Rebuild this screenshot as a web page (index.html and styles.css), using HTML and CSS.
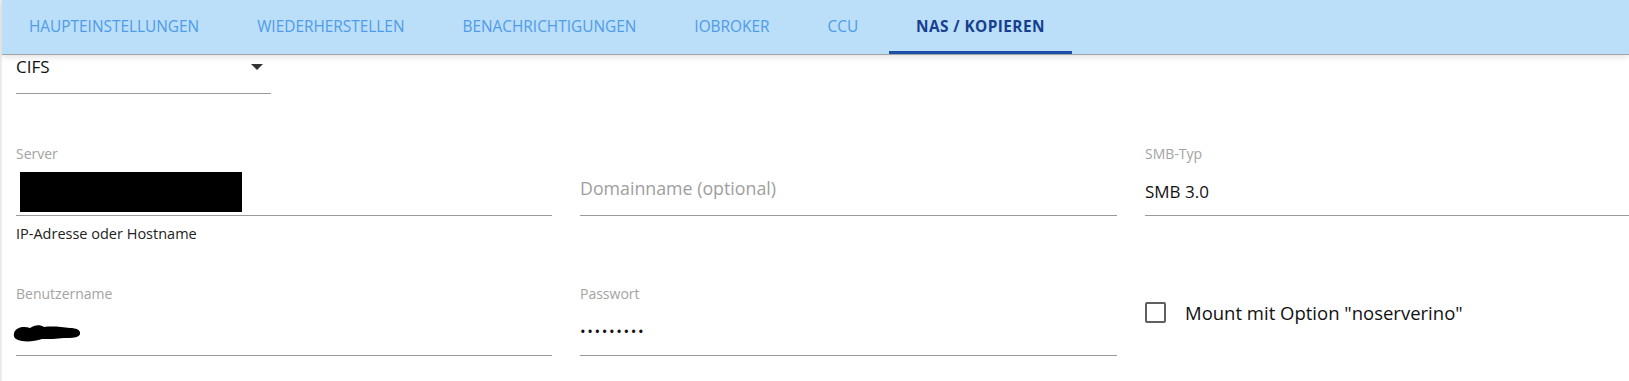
FILE: index.html
```html
<!DOCTYPE html>
<html lang="de">
<head>
  <meta charset="UTF-8" />
  <title>NAS / Kopieren</title>
  <link rel="stylesheet" href="styles.css">
</head>
<body>
  <div class="page">

    <!-- Tabs -->
    <div class="tabbar">
      <div class="tab">Haupteinstellungen</div>
      <div class="tab">Wiederherstellen</div>
      <div class="tab">Benachrichtigungen</div>
      <div class="tab">ioBroker</div>
      <div class="tab">CCU</div>
      <div class="tab active">NAS / Kopieren</div>
    </div>

    <div class="content">

      <!-- Mount type -->
      <div class="select">
        <span class="select-value">CIFS</span>
        <span class="select-arrow"></span>
      </div>

      <div class="fields">
        <div class="field">
          <div class="label">Server</div>
          <div class="value"><span class="redacted"></span></div>
          <div class="helper">IP-Adresse oder Hostname</div>
        </div>
        <div class="field">
          <div class="label"></div>
          <div class="value placeholder">Domainname (optional)</div>
        </div>
        <div class="field">
          <div class="label">SMB-Typ</div>
          <div class="value">SMB 3.0</div>
        </div>

        <div class="field">
          <div class="label">Benutzername</div>
          <div class="value">
            <svg class="scribble" width="70" height="24" viewBox="0 0 70 24">
              <path d="M2 12 C4 6 12 5 18 7 C22 4 28 3 32 6 C40 5 50 6 58 7 C64 7 69 9 68 13 C67 17 60 17 52 17 C44 18 38 18 30 18 C24 20 16 21 10 20 C4 19 1 17 2 12 Z" fill="#000"/>
            </svg>
          </div>
        </div>
        <div class="field">
          <div class="label">Passwort</div>
          <div class="value dots">&bull;&bull;&bull;&bull;&bull;&bull;&bull;&bull;&bull;</div>
        </div>
        <div class="check-field">
          <span class="checkbox"></span>
          <span class="check-label">Mount mit Option "noserverino"</span>
        </div>
      </div>

    </div>
  </div>
</body>
</html>
```
FILE: styles.css
```css
/* — Base — */
* { box-sizing: border-box; margin: 0; padding: 0; }
body {
  font-family: "Open Sans", "Noto Sans", sans-serif;
  background: #fff;
  color: #111;
  overflow: hidden;
}
.page {
  min-height: 100vh;
  border-left: 2px solid #ececec;
}

/* — Tab bar — */
.tabbar {
  display: flex;
  gap: 4px;
  height: 54px;
  background: #bbdef9;
  box-shadow: 0 1px 0 #a3a3a3, 0 3px 6px rgba(0,0,0,0.12);
  position: relative;
  z-index: 1;
}
.tab {
  display: flex; align-items: center;
  padding: 0 27px;
  font-size: 15.4px;
  text-transform: uppercase;
  color: #4f9ce8;
  border-bottom: 3px solid transparent;
  padding-top: 2px;
}
.tab.active {
  color: #173f8f;
  font-weight: 700;
  letter-spacing: 0.4px;
  border-bottom-color: #1d4fa6;
}

/* — Content — */
.content { padding-left: 14px; }

.select {
  width: 255px;
  height: 40px;
  display: flex; justify-content: space-between;
  padding-top: 1px;
  border-bottom: 1px solid #9a9a9a;
  line-height: 24px;
}
.select-value { font-size: 17px; }
.select-arrow {
  width: 0; height: 0;
  margin: 9px 8px 0 0;
  border-left: 6px solid transparent;
  border-right: 6px solid transparent;
  border-top: 6px solid #333;
}

.fields {
  display: grid;
  grid-template-columns: 536px 537px 1fr;
  column-gap: 28px;
  row-gap: 42px;
  margin-top: 51px;
}
.label {
  height: 18px;
  line-height: 18px;
  font-size: 14px;
  color: #a3a3a3;
}
.value {
  height: 44px;
  margin-top: 9px;
  padding-bottom: 4px;
  display: flex; align-items: center;
  font-size: 17px;
  border-bottom: 1px solid #9a9a9a;
}
.value.placeholder {
  color: #9e9e9e;
  font-size: 17.8px;
  padding-bottom: 12px;
}
.redacted {
  display: block;
  width: 222px; height: 40px;
  margin-left: 4px;
  background: #000;
}
.scribble { margin-left: -4px; margin-top: 2px; }
.dots { font-size: 15px; letter-spacing: 1.6px; padding-bottom: 6px; }
.helper {
  margin-top: 9px;
  line-height: 18px;
  font-size: 14.5px;
  color: #222;
}

.check-field {
  display: flex; align-items: center;
  gap: 19px;
  padding-top: 17px;
  align-self: start;
}
.checkbox {
  width: 21px; height: 21px;
  border: 2px solid #5f5f5f;
  border-radius: 2px;
}
.check-label { font-size: 18.5px; line-height: 21px; }
```
